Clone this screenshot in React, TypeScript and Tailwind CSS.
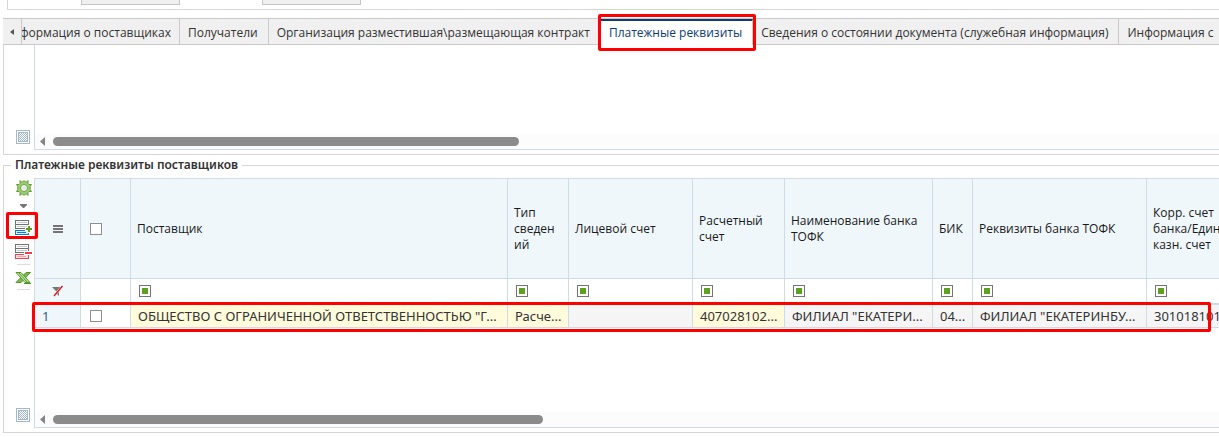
import React, { useState } from "react";

type Column = {
  title: string;
  width: string;
  value: string;
  tone: string;
};

const tabs = [
  "Получатели",
  "Организация разместившая\\размещающая контракт",
  "Платежные реквизиты",
  "Сведения о состоянии документа (служебная информация)",
  "Информация с",
];

const columns: Column[] = [
  { title: "Поставщик", width: "w-[377px]", value: 'ОБЩЕСТВО С ОГРАНИЧЕННОЙ ОТВЕТСТВЕННОСТЬЮ "Г...', tone: "bg-[#fffbdb]" },
  { title: "Тип сведений", width: "w-[61px]", value: "Расче...", tone: "bg-[#fffbdb]" },
  { title: "Лицевой счет", width: "w-[124px]", value: "", tone: "bg-[#f5f5f5]" },
  { title: "Расчетный счет", width: "w-[92px]", value: "407028102...", tone: "bg-[#fffbdb]" },
  { title: "Наименование банка ТОФК", width: "w-[148px]", value: 'ФИЛИАЛ "ЕКАТЕРИ...', tone: "bg-[#f5f5f5]" },
  { title: "БИК", width: "w-[40px]", value: "04...", tone: "bg-[#f5f5f5]" },
  { title: "Реквизиты банка ТОФК", width: "w-[174px]", value: 'ФИЛИАЛ "ЕКАТЕРИНБУ...', tone: "bg-[#f5f5f5]" },
  { title: "Корр. счет\nбанка/Един\nказн. счет", width: "w-[90px]", value: "301018101", tone: "bg-[#f5f5f5]" },
];

const cell = "border-r border-[#d0dce5]";

function GearIcon() {
  return (
    <svg width="17" height="16" viewBox="-1 0 17 16" fill="none">
      <path
        d="M4 .5 5.500 2 6.700 2 8 .5 9.300 2 10.500 2 12 .5V3.500L13 4.500h2.500L14.200 6.500v3l1.300 2H13L12 12.500v3L10.500 14H9.300L8 15.500 6.700 14H5.500L4 15.500v-3L3 11.500H.5L1.800 9.500v-3L.5 4.500H3L4 3.500z"
        fill="#9fca7c"
        stroke="#5fa02c"
      />
      <circle cx="8" cy="8" r="3.500" fill="#fff" stroke="#5fa02c" />
      <circle cx="8" cy="8" r="2" fill="#e4e4e4" />
    </svg>
  );
}

function AddRowIcon() {
  return (
    <svg width="17" height="16" viewBox="0 0 17 16" fill="none" shapeRendering="crispEdges">
      <path d="M.5.5h13v8H.5z" fill="#fff" stroke="#6f7478" />
      <path d="M2 2.500h10M2 6.500h10" stroke="#c9c9c9" />
      <path d="M0 4.500h14" stroke="#6f7478" />
      <path d="M10 10.500H.5v4h13V12" fill="#d5ebfa" stroke="#0f7fd1" />
      <path d="M2 12.500h9" stroke="#0f7fd1" />
      <path d="M10 7h7v4h-7zM12 5h3v8h-3z" fill="#fff" />
      <path d="M11 8h6v2h-6zM13 6h2v6h-2z" fill="#5fa023" />
    </svg>
  );
}

function DeleteRowIcon() {
  return (
    <svg width="17" height="16" viewBox="0 0 17 16" fill="none" shapeRendering="crispEdges">
      <path d="M.5.5h13v8H.5z" fill="#fff" stroke="#6f7478" />
      <path d="M2 2.500h10M2 6.500h10" stroke="#c9c9c9" />
      <path d="M0 4.500h14" stroke="#6f7478" />
      <path d="M10 10.500H.5v4h13V11" fill="#fde0e3" stroke="#ee4458" />
      <path d="M2 12.500h9" stroke="#f7a3ad" />
      <path d="M9 7h8v4H9z" fill="#fff" />
      <path d="M10 8h7v2h-7z" fill="#ee3b50" />
    </svg>
  );
}

function ExcelIcon() {
  return (
    <svg width="17" height="14" viewBox="0 0 17 14" fill="none">
      <path d="M15.500 1.500H11L1 11.500h5z" fill="#7fb558" stroke="#4f9a1c" />
      <path d="M1 1.500h5l9 10h-5z" fill="#c4dfb0" stroke="#4f9a1c" />
      <path d="M3.500 1.500 12.500 11.500" stroke="#4f9a1c" />
      <path d="M9 12.500h7" stroke="#4f9a1c" />
    </svg>
  );
}

function GridIcon() {
  return (
    <svg width="15" height="14" viewBox="0 0 15 14" fill="none" shapeRendering="crispEdges">
      <defs>
        <pattern id="dots" width="2" height="2" patternUnits="userSpaceOnUse">
          <path d="M0 0h1v1H0zM1 1h1v1H1z" fill="#a4b7d0" />
        </pattern>
      </defs>
      <path d="M.5.5h13v13H.5z" fill="#fff" stroke="#a4b7d0" />
      <path d="M2.500 2.500h9v9h-9z" fill="url(#dots)" stroke="#a4b7d0" />
    </svg>
  );
}

function ClearFilterIcon() {
  return (
    <svg className="mx-auto" width="12" height="12" viewBox="0 0 12 12" fill="none">
      <path d="M0 2h10L7 6v5L5 9V7z" fill="#777" />
      <path d="M2 11 10.500 1" stroke="#fff" strokeWidth="2" />
      <path d="M2 11 10.500 1" stroke="#e3141c" strokeWidth="1.400" />
    </svg>
  );
}

function ScrollBar({ thumb }: { thumb: string }) {
  return (
    <div className="flex h-[15px] items-center bg-[#fcfcfc] pl-[5px]">
      <svg width="5" height="9" viewBox="0 0 5 9">
        <path d="M5 0v9L0 4.500z" fill="#858585" />
      </svg>
      <div className={`ml-2 h-[9px] rounded-full bg-[#8b8b8b] ${thumb}`} />
    </div>
  );
}

function Mark({ className }: { className: string }) {
  return <span className={`pointer-events-none absolute z-10 rounded-xs border-3 border-[#fe0000] ${className}`} />;
}

export default function App() {
  const [active, setActive] = useState(2);

  return (
    <main className="overflow-hidden bg-white pl-[3px] font-['Open_Sans','Noto_Sans',sans-serif] text-xs text-[#333]">
      {/* bottom edge of the form above */}
      <div className="ml-1 flex h-[10px] items-start gap-[82px] border-b border-l border-[#d6d6d6] pl-[73px]">
        <button aria-label="Назад" className="h-[5px] w-[99px] border border-t-0 border-[#c6c6c6] bg-[#f0f0f0]" />
        <button aria-label="Далее" className="h-[5px] w-[99px] border border-t-0 border-[#c6c6c6] bg-[#f0f0f0]" />
      </div>

      {/* tabs */}
      <div role="tablist" className="mt-2 flex h-[27px] border-y border-[#c9c9c9] bg-[#f0f0f0] whitespace-nowrap">
        <button aria-label="Прокрутить влево" className="flex w-[19px] shrink-0 items-center justify-center border-r border-[#c9c9c9]">
          <svg width="4" height="6" viewBox="0 0 4 6">
            <path d="M4 0v6L0 3z" fill="#555" />
          </svg>
        </button>
        <button role="tab" className="flex w-[158px] shrink-0 items-center justify-end overflow-hidden border-r border-[#c9c9c9] pt-[2px] pr-2">
          Информация о поставщиках
        </button>
        {tabs.map((tab, i) => (
          <button
            key={tab}
            role="tab"
            aria-selected={i === active}
            onClick={() => setActive(i)}
            className={
              i === active
                ? "relative -mb-px shrink-0 border-t-2 border-r border-t-[#0b3c74] border-r-[#c9c9c9] bg-white pr-[10px] pl-2 text-[#0b3c74]"
                : "shrink-0 border-r border-[#c9c9c9] pt-[2px] pr-[10px] pl-2"
            }
          >
            {tab}
            {i === active && <Mark className="-top-[7px] -right-[4px] -bottom-[6px] -left-[3px]" />}
          </button>
        ))}
      </div>

      {/* upper grid, only its tail is filled */}
      <div className="flex border-b border-l border-[#d6d6d6] pb-1">
        <div className="flex w-[30px] shrink-0 flex-col items-center justify-end pr-[2px] pb-[6px] pl-[11px]">
          <button aria-label="Вид таблицы">
            <GridIcon />
          </button>
        </div>
        <div className="min-w-0 flex-1 border-b border-l border-[#d0dce5]">
          <div className="h-[89px]" />
          <ScrollBar thumb="w-[466px]" />
        </div>
      </div>

      <fieldset className="mt-[2px] flex min-w-0 border border-r-0 border-[#d6d6d6] pt-[5px] pb-1">
        <legend className="ml-[7px] px-1 font-['Noto_Sans','Open_Sans',sans-serif] leading-4 font-semibold">
          Платежные реквизиты поставщиков
        </legend>

        {/* toolbar */}
        <div className="flex w-[30px] shrink-0 flex-col items-center pt-[2px] pr-[2px] pb-[6px] pl-[11px]">
          <button aria-label="Настройки" className="flex flex-col items-center gap-2">
            <GearIcon />
            <svg width="7" height="4" viewBox="0 0 7 4">
              <path d="M0 0h7v1L4 4H3L0 1z" fill="#777" />
            </svg>
          </button>
          <button aria-label="Добавить строку" className="relative mt-3">
            <AddRowIcon />
            <Mark className="-top-2 -right-[6px] -bottom-[3px] -left-[9px]" />
          </button>
          <button aria-label="Удалить строку" className="mt-2">
            <DeleteRowIcon />
          </button>
          <div className="mt-1 h-px w-[13px] bg-[#ddd]" />
          <button aria-label="Экспорт в Excel" className="mt-[6px]">
            <ExcelIcon />
          </button>
          <div className="mt-1 h-px w-[13px] bg-[#ddd]" />
          <button aria-label="Вид таблицы" className="mt-auto">
            <GridIcon />
          </button>
        </div>

        <div className="relative min-w-0 flex-1 border-t border-b border-l border-[#d0dce5]">
          <div className="overflow-hidden">
            <table className="w-[1202px] table-fixed border-separate border-spacing-0 text-left">
              <thead>
                <tr className="h-[100px] bg-[#eff7fb] text-[#1a1a1a]">
                  <th className={`w-[46px] border-b ${cell}`}>
                    <svg className="mx-auto" width="10" height="8" viewBox="0 0 10 8" shapeRendering="crispEdges">
                      <path d="M0 0h10v2H0zM0 3h10v2H0zM0 6h10v2H0z" fill="#757575" />
                    </svg>
                  </th>
                  <th className={`w-[50px] border-b pl-[9px] ${cell}`}>
                    <input type="checkbox" aria-label="Выбрать все" className="block size-3 appearance-none border border-[#8f8f8f] bg-white checked:bg-[#5fa023]" />
                  </th>
                  {columns.map((c) => (
                    <th key={c.title} className={`border-b px-[6px] pt-px leading-4 font-normal wrap-break-word whitespace-pre-line ${c.width} ${cell}`}>
                      {c.title}
                    </th>
                  ))}
                </tr>
              </thead>
              <tbody>
                <tr className="h-[26px]">
                  <td className={`border-b-2 bg-[#eff7fb] ${cell}`}>
                    <ClearFilterIcon />
                  </td>
                  <td className={`border-b-2 ${cell}`} />
                  {columns.map((c) => (
                    <td key={c.title} className={`border-b-2 pl-2 ${cell}`}>
                      <button aria-label={`Фильтр: ${c.title}`} className="block size-3 border border-[#757575] bg-white p-[2px]">
                        <span className="block size-full bg-[#5fa023]" />
                      </button>
                    </td>
                  ))}
                </tr>
                <tr className="h-[23px] font-['Noto_Sans','Open_Sans',sans-serif] text-[13px] leading-4">
                  <td className={`border-b bg-[#eff7fb] pl-[7px] text-[#2a6496] ${cell}`}>1</td>
                  <td className={`border-b pl-[9px] ${cell}`}>
                    <input type="checkbox" aria-label="Выбрать строку 1" className="block size-3 appearance-none border border-[#8f8f8f] bg-white checked:bg-[#5fa023]" />
                  </td>
                  {columns.map((c) => (
                    <td key={c.title} className={`border-b pl-[7px] whitespace-nowrap ${c.tone} ${cell}`}>
                      {c.value}
                    </td>
                  ))}
                </tr>
              </tbody>
            </table>
          </div>
          <div className="h-[84px]" />
          <ScrollBar thumb="w-[490px]" />
          <Mark className="top-[123px] right-2 -left-[3px] h-[30px]" />
        </div>
      </fieldset>
    </main>
  );
}
